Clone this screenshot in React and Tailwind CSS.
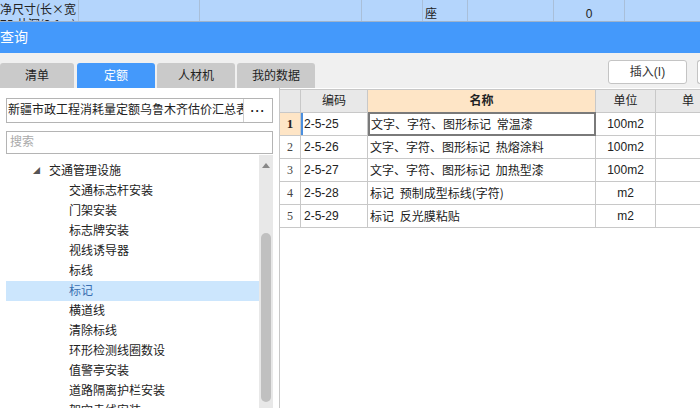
import React from "react";

const rows = [
  { no: 1, code: "2-5-25", name: "文字、字符、图形标记 常温漆", unit: "100m2" },
  { no: 2, code: "2-5-26", name: "文字、字符、图形标记 热熔涂料", unit: "100m2" },
  { no: 3, code: "2-5-27", name: "文字、字符、图形标记 加热型漆", unit: "100m2" },
  { no: 4, code: "2-5-28", name: "标记 预制成型标线(字符)", unit: "m2" },
  { no: 5, code: "2-5-29", name: "标记 反光膜粘贴", unit: "m2" },
];

const tree = [
  "交通标志杆安装",
  "门架安装",
  "标志牌安装",
  "视线诱导器",
  "标线",
  "标记",
  "横道线",
  "清除标线",
  "环形检测线圈数设",
  "值警亭安装",
  "道路隔离护栏安装",
  "架空走线安装",
];

export default function App() {
  return (
    <div className="w-[700px] h-[408px] overflow-hidden bg-white text-[12px] text-[#222] font-['Liberation_Sans','Noto_Sans_CJK_SC',sans-serif]">
      {/* 上の表の残り */}
      <div className="h-[22px] bg-[#b4d5fc] border-b border-[#9fb3cb] flex overflow-hidden">
        <div className="w-[79px] shrink-0 border-r border-[#a9bfd9] leading-[15px] pt-[1px] whitespace-nowrap overflow-hidden font-['Noto_Sans_CJK_SC',sans-serif]">
          <div>净尺寸(长×宽</div>
          <div>75 井深(3.1m)</div>
        </div>
        <div className="w-[121px] shrink-0 border-r border-[#a9bfd9]" />
        <div className="w-[162px] shrink-0 border-r border-[#a9bfd9]" />
        <div className="w-[61px] shrink-0 border-r border-[#a9bfd9]" />
        <div className="w-[45px] shrink-0 border-r border-[#a9bfd9] pl-[2px] pt-[7px] leading-[14px]">座</div>
        <div className="w-[86px] shrink-0 border-r border-[#a9bfd9]" />
        <div className="w-[71px] shrink-0 border-r border-[#a9bfd9] text-center pt-[7px] leading-[14px]">0</div>
        <div className="flex-1" />
      </div>

      {/* 查询 */}
      <div className="h-[31px] bg-[#4499fb] text-white text-[14px] flex items-center">查询</div>

      {/* タブ */}
      <div className="h-[35px] bg-[#f0f0f0] flex">
        <div className="flex items-end">
          <div className="w-[74px] h-[25px] rounded-t-[3px] bg-[#cacaca] flex items-center justify-center">清单</div>
          <div className="w-[78px] h-[25px] ml-[3px] rounded-t-[3px] bg-[#4499fb] text-white flex items-center justify-center">定额</div>
          <div className="w-[78px] h-[25px] ml-[2px] rounded-t-[3px] bg-[#cacaca] flex items-center justify-center">人材机</div>
          <div className="w-[78px] h-[25px] ml-[2px] rounded-t-[3px] bg-[#cacaca] flex items-center justify-center">我的数据</div>
        </div>
        <div className="ml-auto flex items-start pt-[7px] gap-[10px]">
          <button className="w-[79px] h-[24px] bg-white border border-[#c4c4c4] rounded-[3px] text-[#333]">插入(I)</button>
          <button className="w-[3px] h-[24px] bg-white border border-[#c4c4c4] rounded-l-[3px] border-r-0" />
        </div>
      </div>

      {/* 下部 */}
      <div className="h-[320px] flex">
        {/* 左パネル */}
        <div className="w-[279px] shrink-0 flex flex-col">
          <div className="mt-[10px] ml-[6px] w-[267px] h-[25px] border border-[#b4b4b4] flex">
            <div className="flex-1 overflow-hidden whitespace-nowrap pl-[1px] leading-[23px]">新疆市政工程消耗量定额乌鲁木齐估价汇总表</div>
            <div className="w-[29px] border-l border-[#d0d0d0] flex items-center justify-center font-bold tracking-[1px]">···</div>
          </div>
          <div className="mt-[8px] ml-[6px] w-[267px] h-[23px] border border-[#b4b4b4] pl-[3px] leading-[21px] text-[#aaa]">搜索</div>
          <div className="flex flex-1 mt-[1px] overflow-hidden">
            <div className="w-[259px] shrink-0 pt-[6px]">
              <div className="ml-[6px] h-[20px] flex items-center">
                <span className="ml-[27px] w-[16px] text-[7px] text-[#555]">◢</span>
                <span>交通管理设施</span>
              </div>
              {tree.map((t) => (
                <div
                  key={t}
                  className={
                    t === "标记"
                      ? "ml-[6px] h-[20px] flex items-center pl-[63px] bg-[#cce6fd] text-[#3a6fb0]"
                      : "ml-[6px] h-[20px] flex items-center pl-[63px]"
                  }>
                  {t}
                </div>
              ))}
            </div>
            <div className="w-[14px] shrink-0 bg-[#e8e8e8] flex flex-col items-center">
              <div className="mt-[8px] w-0 h-0 border-l-[4px] border-r-[4px] border-b-[5px] border-l-transparent border-r-transparent border-b-[#888]" />
              <div className="mt-[65px] w-[10px] h-[169px] rounded-full bg-[#c0c0c0]" />
            </div>
          </div>
        </div>

        {/* 右の表 */}
        <div className="flex-1 border-l border-[#c8c8c8] pt-[1px] overflow-hidden">
          <div className="flex h-[24px] border-t border-b border-[#c8c8c8] bg-[#e8e8e8]">
            <div className="w-[21px] shrink-0 border-r border-[#c8c8c8]" />
            <div className="w-[67px] shrink-0 border-r border-[#c8c8c8] flex items-center justify-center">编码</div>
            <div className="w-[228px] shrink-0 border-r border-[#c8c8c8] bg-[#fee5c6] flex items-center justify-center font-bold">名称</div>
            <div className="w-[60px] shrink-0 border-r border-[#c8c8c8] flex items-center justify-center">单位</div>
            <div className="w-[60px] shrink-0 pl-[26px] flex items-center">单</div>
          </div>
          {rows.map((r) => (
            <div key={r.no} className="flex h-[23px] border-b border-[#c8c8c8]">
              <div
                className={
                  r.no === 1
                    ? "w-[21px] shrink-0 border-r border-[#c8c8c8] bg-[#fee5c6] flex items-center justify-center font-bold font-['Liberation_Serif',serif] text-[13px]"
                    : "w-[21px] shrink-0 border-r border-[#c8c8c8] flex items-center justify-center font-['Liberation_Serif',serif] text-[#444]"
                }>
                {r.no}
              </div>
              <div
                className={
                  r.no === 1
                    ? "w-[67px] shrink-0 border-r border-[#c8c8c8] border-l-2 border-l-[#4a8fe0] flex items-center pl-[1px]"
                    : "w-[67px] shrink-0 border-r border-[#c8c8c8] flex items-center pl-[3px]"
                }>
                {r.code}
              </div>
              <div
                className={
                  r.no === 1
                    ? "w-[228px] shrink-0 border-2 border-[#7a7a7a] -mt-[1px] h-[24px] flex items-center pl-[1px] whitespace-pre [word-spacing:3px] font-['Noto_Sans_CJK_SC',sans-serif]"
                    : "w-[228px] shrink-0 border-r border-[#c8c8c8] flex items-center pl-[2px] whitespace-pre [word-spacing:3px] font-['Noto_Sans_CJK_SC',sans-serif]"
                }>
                {r.name}
              </div>
              <div className="w-[60px] shrink-0 border-r border-[#c8c8c8] flex items-center justify-center">{r.unit}</div>
              <div className="flex-1" />
            </div>
          ))}
        </div>
      </div>
    </div>
  );
}
